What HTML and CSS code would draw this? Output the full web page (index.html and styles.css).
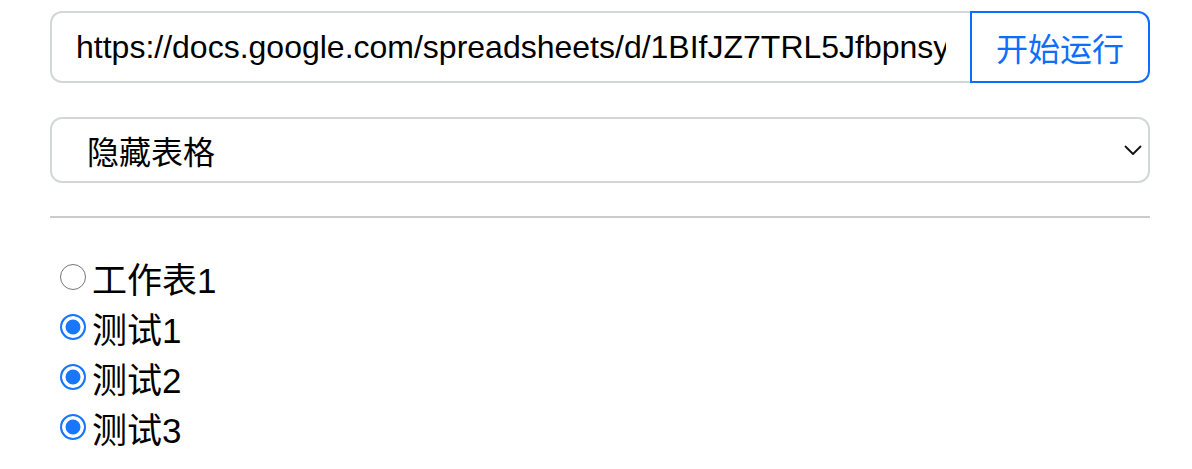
FILE: index.html
```html
<!DOCTYPE html>
<html lang="zh">
<head>
<meta charset="utf-8">
<link rel="stylesheet" href="styles.css">
</head>
<body>
<div class="page">
  <div class="input-group">
    <input class="url-input" type="text" value="https://docs.google.com/spreadsheets/d/1BIfJZ7TRL5JfbpnsyQwErTyUiOp/edit#gid=0">
    <button class="run-btn" type="button">开始运行</button>
  </div>
  <div class="select-wrap">
    <select class="mode-select">
      <option>隐藏表格</option>
      <option>显示表格</option>
    </select>
    <svg class="chevron" width="18" height="11" viewBox="0 0 18 11"><path d="M1.5 1.5 L9 9 L16.5 1.5" fill="none" stroke="#111" stroke-width="1.8" stroke-linecap="round" stroke-linejoin="round"/></svg>
  </div>
  <hr class="divider">
  <div class="sheet-list">
    <label class="sheet-item"><input type="radio" class="radio" name="s0">工作表1</label>
    <label class="sheet-item"><input type="radio" class="radio" name="s1" checked>测试1</label>
    <label class="sheet-item"><input type="radio" class="radio" name="s2" checked>测试2</label>
    <label class="sheet-item"><input type="radio" class="radio" name="s3" checked>测试3</label>
  </div>
</div>
</body>
</html>
```

FILE: styles.css
```css
* { box-sizing: border-box; }
html, body { margin: 0; padding: 0; background: #fff; }
body {
  font-family: "Liberation Sans", "Noto Sans CJK SC", sans-serif;
  color: #000;
}
.page {
  padding: 11px 42px 0 50px;
}
.input-group {
  display: flex;
  height: 72px;
}
.url-input {
  flex: 1;
  min-width: 0;
  height: 72px;
  margin: 0;
  border: 2px solid #d3d6da;
  border-right: none;
  border-radius: 12px 0 0 12px;
  padding: 0 24px 0 24px;
  font-family: "Liberation Sans", "Noto Sans CJK SC", sans-serif;
  font-size: 32px;
  color: #000;
  background: #fff;
  outline: none;
}
.run-btn {
  width: 180px;
  height: 72px;
  margin: 0;
  border: 2px solid #0d6efd;
  border-radius: 0 12px 12px 0;
  background: #fff;
  color: #0d6efd;
  font-family: "Noto Sans CJK SC", sans-serif;
  font-size: 32px;
  padding: 0;
}
.select-wrap {
  position: relative;
  margin-top: 34px;
}
.mode-select {
  appearance: none;
  -webkit-appearance: none;
  display: block;
  width: 100%;
  height: 66px;
  margin: 0;
  border: 2px solid #d3d6da;
  border-radius: 12px;
  background: #fff;
  padding: 0 60px 0 35px;
  font-family: "Noto Sans CJK SC", sans-serif;
  font-size: 32px;
  color: #000;
  outline: none;
}
.chevron {
  position: absolute;
  right: 8px;
  top: 28px;
  pointer-events: none;
}
.divider {
  margin: 33px 0 0 0;
  border: none;
  height: 2px;
  background: #cccccc;
}
.sheet-list {
  display: flex;
  flex-direction: column;
  padding-top: 34px;
}
.sheet-item {
  display: flex;
  align-items: center;
  height: 50px;
  font-size: 35px;
  font-family: "Liberation Sans", "Noto Sans CJK SC", sans-serif;
}
.radio {
  appearance: none;
  -webkit-appearance: none;
  width: 26px;
  height: 26px;
  margin: 0 6px 0 10px;
  border: 1.5px solid #767676;
  border-radius: 50%;
  background: #fff;
  flex: none;
}
.radio:checked {
  border: 2px solid #1877ff;
  background: #1877ff;
  box-shadow: inset 0 0 0 3.5px #fff;
}
```
